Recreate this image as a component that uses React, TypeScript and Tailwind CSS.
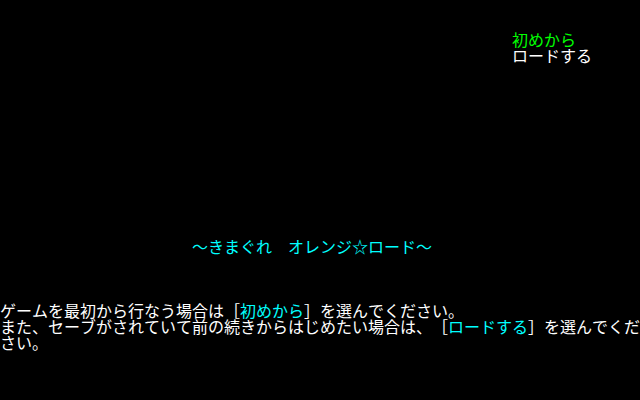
type Seg = { t: string; c?: string };

function Cells({ segs }: { segs: Seg[] }) {
  return (
    <div className="flex h-[16px]">
      {segs.flatMap((s, i) =>
        Array.from(s.t).map((ch, j) => (
          <span key={`${i}-${j}`} className={`inline-block w-[16px] shrink-0 overflow-visible ${s.c ?? ""}`}>
            {ch}
          </span>
        ))
      )}
    </div>
  );
}

export default function App() {
  const cyan = "text-[#00ffff]";
  return (
    <div
      className="w-[640px] h-[400px] bg-black text-white flex flex-col text-[16px] leading-[16px] overflow-hidden [text-spacing-trim:space-all] [font-kerning:none] whitespace-nowrap"
      style={{ fontFamily: '"Noto Sans CJK JP", "Noto Sans CJK SC", sans-serif' }}
    >
      <div className="pl-[512px] pt-[31px] flex flex-col">
        <Cells segs={[{ t: "初めから", c: "text-[#00ff00]" }]} />
        <Cells segs={[{ t: "ロードする" }]} />
      </div>
      <div className="mt-[175px] pl-[192px]">
        <Cells segs={[{ t: "～きまぐれ　オレンジ☆ロード～", c: cyan }]} />
      </div>
      <div className="mt-[48px] flex flex-col">
        <Cells
          segs={[
            { t: "ゲームを最初から行なう場合は［" },
            { t: "初めから", c: cyan },
            { t: "］を選んでください。" },
          ]}
        />
        <Cells
          segs={[
            { t: "また、セーブがされていて前の続きからはじめたい場合は、［" },
            { t: "ロードする", c: cyan },
            { t: "］を選んでくだ" },
          ]}
        />
        <Cells segs={[{ t: "さい。" }]} />
      </div>
    </div>
  );
}
